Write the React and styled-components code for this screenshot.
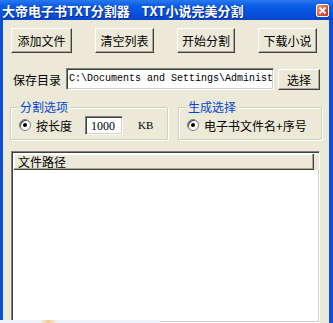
import React from "react";
import styled, { createGlobalStyle } from "styled-components";

const Global = createGlobalStyle`
  html, body { margin: 0; padding: 0; background: #ece9d8; }
  body { font-family: "Noto Sans CJK SC", "Liberation Sans", sans-serif; }
`;

const Window = styled.div`
  width: 333px;
  height: 323px;
  display: flex;
  flex-direction: column;
  background: #0a4fd8;
  overflow: hidden;
  position: relative;
`;

const TitleBar = styled.div`
  height: 20px;
  display: flex;
  align-items: center;
  justify-content: space-between;
  padding: 0 4px 0 2px;
  background: linear-gradient(180deg, #2a78f0 0%, #0a5ce6 30%, #0550dc 70%, #0845c8 100%);
  color: #fff;
  font-size: 13px;
  font-weight: bold;
  white-space: pre;
  text-shadow: 1px 1px 0 #0a2a8a;
  flex-shrink: 0;
`;

const Close = styled.div`
  width: 13px;
  height: 13px;
  border-radius: 2px;
  background: linear-gradient(135deg, #f0a080, #e05030 60%, #c03818);
  border: 1px solid #fff;
  box-sizing: border-box;
  display: flex;
  align-items: center;
  justify-content: center;
  margin-top: 1px;
`;

const Body = styled.div`
  flex: 1;
  margin: 0 4px 0 3px;
  background: #ece9d8;
  display: flex;
  flex-direction: column;
  padding: 8px 7px 0 7px;
  min-height: 0;
`;

const ButtonRow = styled.div`
  display: flex;
  justify-content: space-between;
  padding: 0 5px 0 1px;
`;

const Button = styled.div`
  width: ${(p) => p.w || 60}px;
  height: ${(p) => p.h || 25}px;
  margin-left: ${(p) => p.ml || 0}px;
  box-sizing: border-box;
  background: #ece9d8;
  border-top: 1px solid #fff;
  border-left: 1px solid #fff;
  border-right: 1px solid #404040;
  border-bottom: 1px solid #404040;
  box-shadow: inset -1px -1px 0 #aca899;
  display: flex;
  align-items: center;
  justify-content: center;
  font-size: 12px;
  color: #000;
`;

const PathRow = styled.div`
  display: flex;
  align-items: center;
  margin-top: 15px;
  height: 22px;
`;

const Label = styled.span`
  font-size: 12px;
  color: #000;
  margin-left: 3px;
  width: 53px;
`;

const Sunken = styled.div`
  box-sizing: border-box;
  background: #fff;
  border-top: 1px solid #808080;
  border-left: 1px solid #808080;
  border-right: 1px solid #fff;
  border-bottom: 1px solid #fff;
  box-shadow: inset 1px 1px 0 #404040, inset -1px -1px 0 #d4d0c8;
`;

const PathInput = styled(Sunken)`
  width: 208px;
  height: 22px;
  font-family: "Liberation Mono", monospace;
  font-size: 10px;
  line-height: 20px;
  padding-left: 2px;
  white-space: pre;
  overflow: hidden;
`;

const GroupRow = styled.div`
  display: flex;
  justify-content: space-between;
  margin-top: 17px;
  height: 33px;
`;

const Group = styled.div`
  position: relative;
  width: ${(p) => p.w}px;
  box-sizing: border-box;
  border: 1px solid #d0d0bf;
  box-shadow: inset 1px 1px 0 #fff, 1px 1px 0 #fff;
  border-radius: 2px;
  display: flex;
  align-items: center;
  padding-left: 8px;
  padding-top: 3px;
`;

const Legend = styled.span`
  position: absolute;
  left: 7px;
  top: -9px;
  background: #ece9d8;
  padding: 0 2px;
  font-size: 12px;
  line-height: 15px;
  color: #0046d5;
`;

const Radio = styled.span`
  width: 10px;
  height: 10px;
  border-radius: 50%;
  background: #fff;
  border: 1px solid #808080;
  box-shadow: inset 1px 1px 0 #404040;
  display: inline-flex;
  align-items: center;
  justify-content: center;
  margin-right: 5px;
  flex-shrink: 0;
  &::after {
    content: "";
    width: 4px;
    height: 4px;
    border-radius: 50%;
    background: #000;
  }
`;

const Text = styled.span`
  font-size: 12px;
  color: #000;
`;

const SizeInput = styled(Sunken)`
  width: 38px;
  height: 19px;
  margin-left: 13px;
  font-family: "Liberation Serif", serif;
  font-size: 12px;
  line-height: 18px;
  padding-left: 5px;
`;

const Unit = styled.span`
  font-family: "Liberation Serif", serif;
  font-size: 11px;
  margin-left: 15px;
`;

const List = styled(Sunken)`
  margin-top: 11px;
  flex: 1;
  display: flex;
  flex-direction: column;
  margin-left: 1px;
  margin-right: 2px;
`;

const HeaderRow = styled.div`
  display: flex;
  height: 16px;
  margin: 2px 0 0 2px;
`;

const HeaderCell = styled.div`
  box-sizing: border-box;
  height: 16px;
  background: #ece9d8;
  border-right: 1px solid #404040;
  border-bottom: 1px solid #404040;
  box-shadow: inset -1px -1px 0 #aca899, inset 1px 1px 0 #fff;
  font-size: 12px;
  line-height: 15px;
  padding-left: 4px;
  width: ${(p) => p.w}px;
  flex-shrink: 0;
`;

const HeaderFill = styled.div`
  flex: 1;
  height: 16px;
  background: #ece9d8;
`;

const BottomStrip = styled.div`
  position: absolute;
  left: 0;
  bottom: 0;
  width: 160px;
  height: 3px;
  background: linear-gradient(90deg, #eef4fa 0%, #eef4fa 25%, #f5c890 30%, #eef4fa 36%, #eef4fa 100%);
`;

export default function App() {
  return (
    <>
      <Global />
      <Window>
        <TitleBar>
          <span>{"大帝电子书TXT分割器    TXT小说完美分割"}</span>
          <Close>
            <svg width="9" height="9" viewBox="0 0 9 9">
              <path d="M1.5 1.5 L7.5 7.5 M7.5 1.5 L1.5 7.5" stroke="#fff" strokeWidth="1.8" />
            </svg>
          </Close>
        </TitleBar>
        <Body>
          <ButtonRow>
            <Button w={61}>添加文件</Button>
            <Button w={59}>清空列表</Button>
            <Button w={58}>开始分割</Button>
            <Button w={59}>下载小说</Button>
          </ButtonRow>
          <PathRow>
            <Label>保存目录</Label>
            <PathInput>{"C:\\Documents and Settings\\Administ"}</PathInput>
            <Button w={42} h={21} ml={4}>选择</Button>
          </PathRow>
          <GroupRow>
            <Group w={158}>
              <Legend>分割选项</Legend>
              <Radio />
              <Text>按长度</Text>
              <SizeInput>1000</SizeInput>
              <Unit>KB</Unit>
            </Group>
            <Group w={144}>
              <Legend>生成选择</Legend>
              <Radio />
              <Text>电子书文件名+序号</Text>
            </Group>
          </GroupRow>
          <List>
            <HeaderRow>
              <HeaderCell w={300}>文件路径</HeaderCell>
              <HeaderFill />
            </HeaderRow>
          </List>
        </Body>
        <BottomStrip />
      </Window>
    </>
  );
}
